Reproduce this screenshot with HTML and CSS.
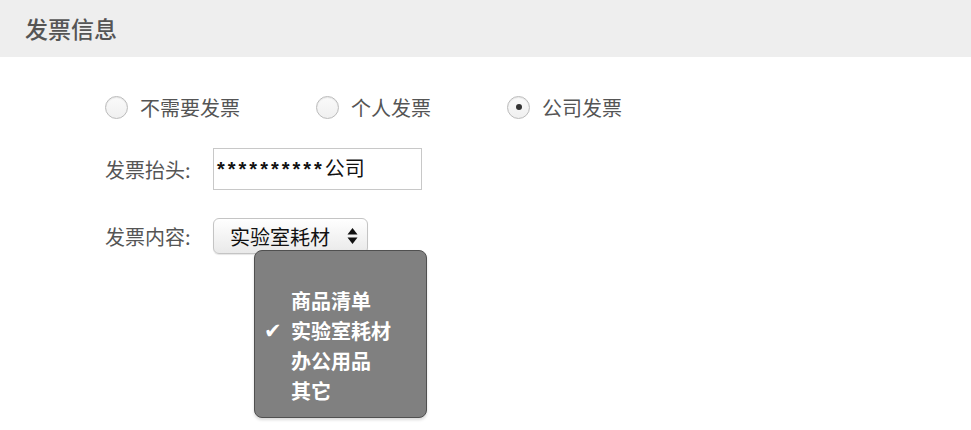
FILE: index.html
```html
<!DOCTYPE html>
<html lang="zh">
<head>
    <meta charset="UTF-8">
    <title>发票信息</title>
    <link rel="stylesheet" href="styles.css">
</head>
<body>
    <div class="section-title">发票信息</div>

    <div class="invoice">
        <div class="radio-row">
            <label class="radio"><span class="dot"></span>不需要发票</label>
            <label class="radio"><span class="dot"></span>个人发票</label>
            <label class="radio checked"><span class="dot"></span>公司发票</label>
        </div>

        <div class="form-row">
            <span class="label">发票抬头:</span>
            <div class="text-input"><span class="stars">**********</span>公司</div>
        </div>

        <div class="form-row content-row">
            <span class="label">发票内容:</span>
            <div class="select-wrap">
                <div class="select">
                    <span>实验室耗材</span>
                    <svg class="arrows" width="11" height="18" viewBox="0 0 11 18">
                        <path d="M5.5 1 L10.5 7.5 L0.5 7.5 Z" fill="#111"/>
                        <path d="M5.5 17 L10.5 10.5 L0.5 10.5 Z" fill="#111"/>
                    </svg>
                </div>
                <!-- 下拉菜单 -->
                <ul class="dropdown">
                    <li>商品清单</li>
                    <li class="selected">实验室耗材</li>
                    <li>办公用品</li>
                    <li>其它</li>
                </ul>
            </div>
        </div>
    </div>
</body>
</html>
```

FILE: styles.css
```css
body {
    margin: 0;
    min-height: 100vh;
    background-color: #fff;
    font-family: "Liberation Serif", "Noto Sans CJK SC", serif;
    color: #555;
}

.section-title {
    height: 57px;
    line-height: 57px;
    padding-left: 25px;
    background-color: #eeeeee;
    font-family: "Noto Sans CJK SC", sans-serif;
    font-size: 23px;
    font-weight: 500;
    color: #555;
}

.invoice {
    padding-left: 105px;
}

.radio-row {
    display: flex;
    gap: 76px;
    margin-top: 37px;
    height: 26px;
    align-items: center;
}

.radio {
    display: flex;
    align-items: center;
    gap: 12px;
    font-family: "Noto Sans CJK SC", sans-serif;
    font-size: 20px;
    color: #555;
}

.dot {
    width: 21px;
    height: 21px;
    border: 1px solid #bbb;
    border-radius: 50%;
    background: linear-gradient(#fafafa, #f0f0f0);
    box-shadow: inset 0 1px 1px rgba(0, 0, 0, 0.08);
    display: flex;
    justify-content: center;
    align-items: center;
}

.radio.checked .dot::after {
    content: "";
    width: 6px;
    height: 6px;
    border-radius: 50%;
    background-color: #333;
}

.form-row {
    display: flex;
    align-items: center;
    margin-top: 28px;
}

.form-row .label {
    width: 108px;
    font-family: "Noto Sans CJK SC", sans-serif;
    font-size: 20px;
    color: #555;
}

.text-input {
    width: 204px;
    height: 40px;
    border: 1px solid #c8c8c8;
    padding-left: 3px;
    line-height: 40px;
    font-family: "Liberation Sans", "Noto Sans CJK SC", sans-serif;
    font-size: 20px;
    color: #111;
}

.stars {
    font-weight: bold;
    letter-spacing: 3px;
}

.content-row {
    margin-top: 28px;
}

.select-wrap {
    position: relative;
}

.select {
    width: 155px;
    height: 36px;
    border: 1px solid #c4c4c4;
    border-radius: 6px;
    background: linear-gradient(#ffffff, #e9e9e9);
    box-shadow: 0 1px 1px rgba(0, 0, 0, 0.1);
    display: flex;
    align-items: center;
    padding-left: 16px;
    box-sizing: border-box;
    font-family: "Noto Sans CJK SC", sans-serif;
    font-size: 20px;
    color: #111;
}

.arrows {
    margin-left: 17px;
}

.dropdown {
    position: absolute;
    left: 41px;
    top: 32px;
    width: 173px;
    height: 168px;
    margin: 0;
    padding: 35px 0 0 36px;
    box-sizing: border-box;
    list-style: none;
    background-color: #808080;
    border: 1px solid #505050;
    border-radius: 8px;
    box-shadow: 0 2px 3px rgba(0, 0, 0, 0.15);
    font-family: "Noto Sans CJK SC", sans-serif;
    font-weight: bold;
    font-size: 20px;
    line-height: 30px;
    color: #fff;
}

.dropdown li {
    position: relative;
}

.dropdown li.selected::before {
    content: "✔";
    position: absolute;
    left: -27px;
    font-size: 21px;
    font-family: "DejaVu Sans", sans-serif;
}
```
